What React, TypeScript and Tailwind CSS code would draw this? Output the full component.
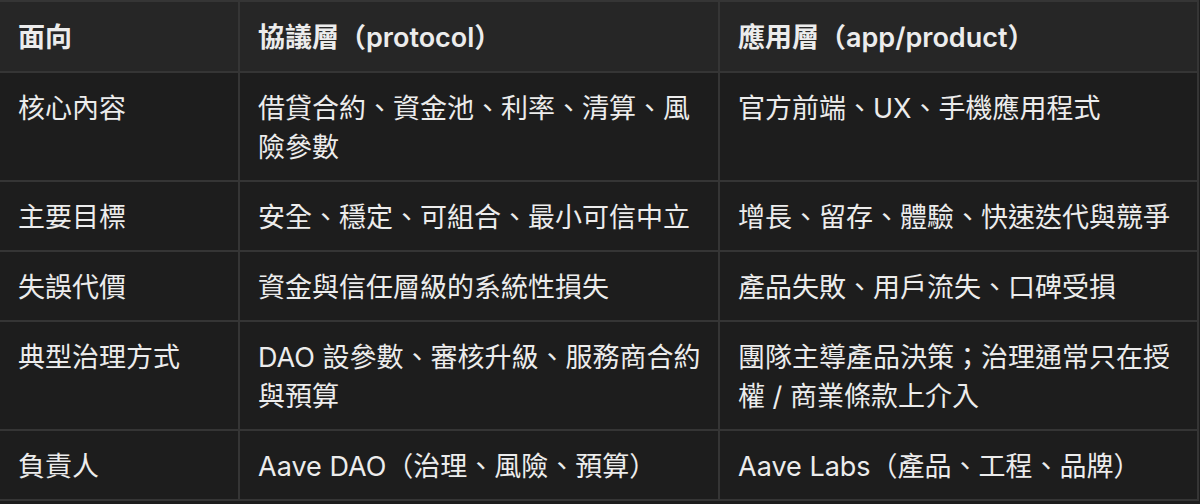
import React from "react";

const rows: [string, string, string][] = [
  ["核心內容", "借貸合約、資金池、利率、清算、風險參數", "官方前端、UX、手機應用程式"],
  ["主要目標", "安全、穩定、可組合、最小可信中立", "增長、留存、體驗、快速迭代與競爭"],
  ["失誤代價", "資金與信任層級的系統性損失", "產品失敗、用戶流失、口碑受損"],
  ["典型治理方式", "DAO 設參數、審核升級、服務商合約與預算", "團隊主導產品決策；治理通常只在授權 / 商業條款上介入"],
  ["負責人", "Aave DAO（治理、風險、預算）", "Aave Labs（產品、工程、品牌）"],
];

export default function App() {
  const font = { fontFamily: 'Inter, "Noto Sans CJK TC", sans-serif' };
  return (
    <div className="w-[1200px] h-[504px] bg-[#1d1d1d] overflow-hidden" style={font}>
      <table className="border-collapse w-[1198px] table-fixed text-[27px] leading-[39px] text-[#ececec]">
        <colgroup>
          <col className="w-[239px]" />
          <col className="w-[480px]" />
          <col className="w-[479px]" />
        </colgroup>
        <thead>
          <tr className="bg-[#262626]">
            <th className="border-2 border-l-0 border-[#353535] text-left font-semibold align-top pl-[18px] pr-[12px] pt-[16px] pb-[14px]">面向</th>
            <th className="border-2 border-[#353535] text-left font-semibold align-top pl-[18px] pr-[12px] pt-[16px] pb-[14px]">協議層（protocol）</th>
            <th className="border-2 border-[#353535] text-left font-semibold align-top pl-[18px] pr-[12px] pt-[16px] pb-[14px]">應用層（app/product）</th>
          </tr>
        </thead>
        <tbody>
          {rows.map((r, i) => (
            <tr key={i} className="bg-[#1d1d1d]">
              <td className="border-2 border-l-0 border-[#353535] align-top pl-[18px] pr-[12px] pt-[16px] pb-[13px]">{r[0]}</td>
              <td className="border-2 border-[#353535] align-top pl-[18px] pr-[12px] pt-[16px] pb-[13px]">{r[1]}</td>
              <td className="border-2 border-[#353535] align-top pl-[18px] pr-[12px] pt-[16px] pb-[13px]">{r[2]}</td>
            </tr>
          ))}
        </tbody>
      </table>
    </div>
  );
}
